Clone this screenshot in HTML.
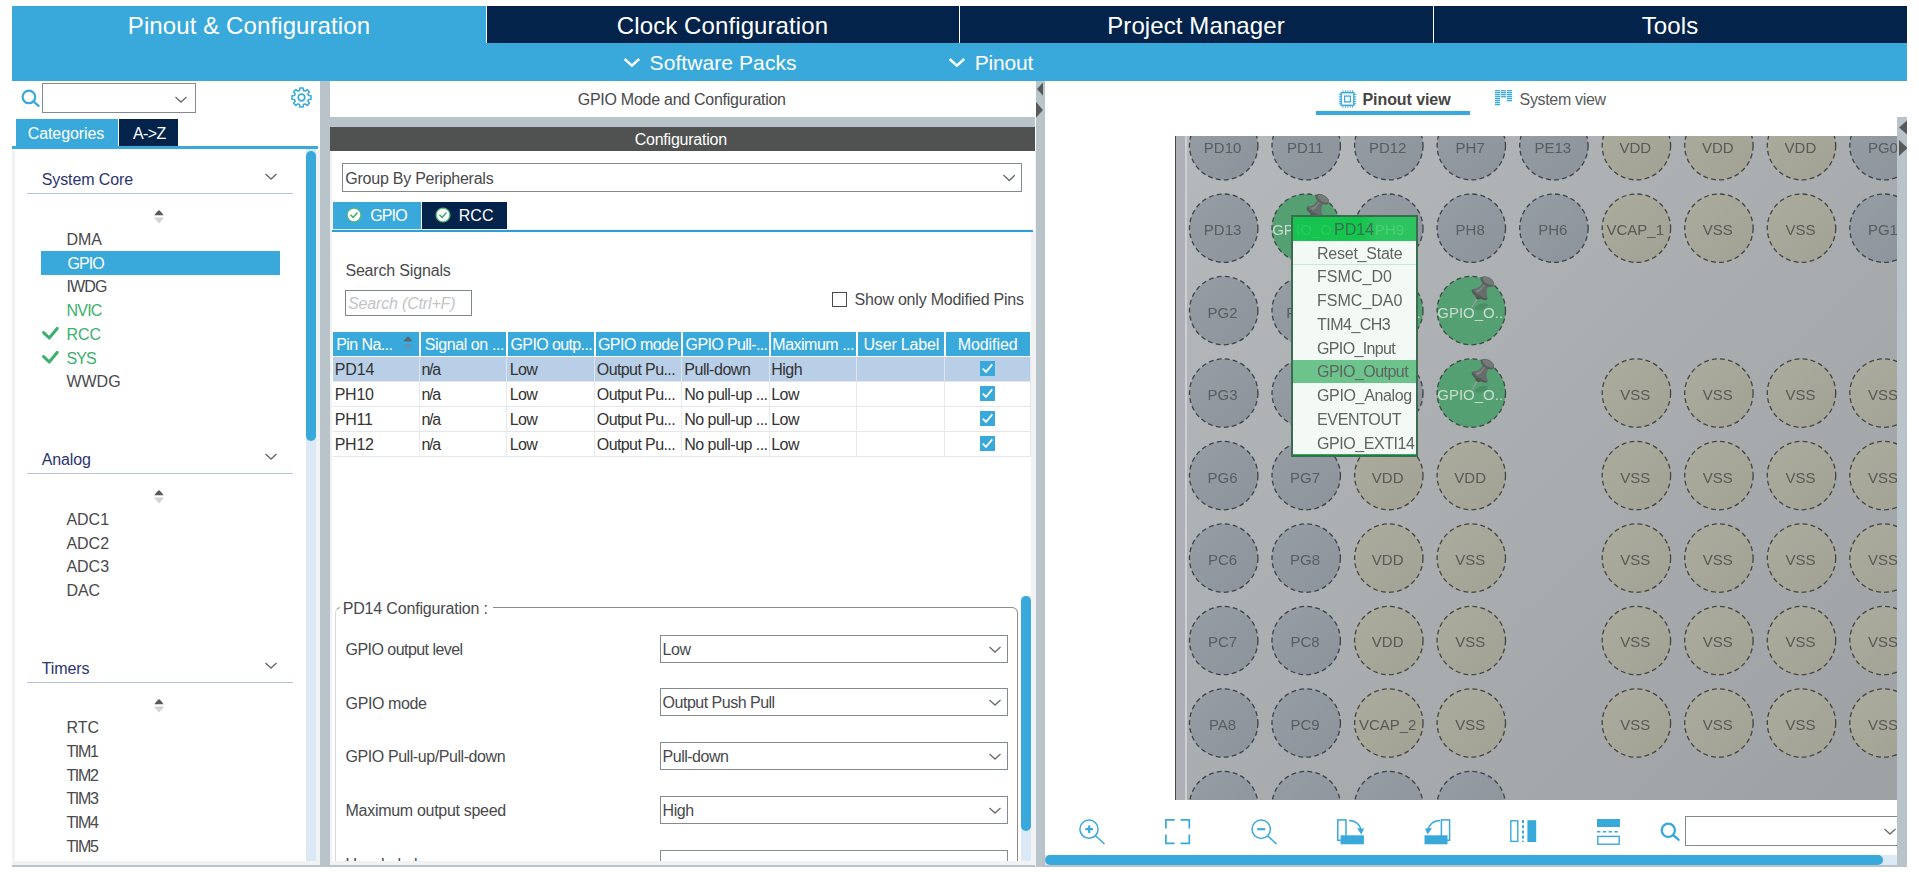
<!DOCTYPE html>
<html><head><meta charset="utf-8"><title>STM32CubeMX - Pinout &amp; Configuration</title>
<style>
html,body{margin:0;padding:0;background:#fff;}
body{width:1919px;height:872px;position:relative;overflow:hidden;font-family:"Liberation Sans",Arial,sans-serif;}
body div,body svg{position:absolute;box-sizing:border-box;}
.t{white-space:nowrap;}
.clip{overflow:hidden;}
</style></head><body>
<div style="left:12px;top:6px;width:1895px;height:75px;background:#39a9dc;"></div>
<div style="left:486px;top:6px;width:1421px;height:37px;background:#03234b;"></div>
<div style="left:486px;top:6px;width:1px;height:37px;background:#fff;"></div>
<div style="left:959px;top:6px;width:1px;height:37px;background:#fff;"></div>
<div style="left:1433px;top:6px;width:1px;height:37px;background:#fff;"></div>
<div class="t" style="top:10.00px;font-size:24px;line-height:31px;color:#fff;left:-51.00px;width:600px;text-align:center;letter-spacing:0.1px;">Pinout &amp; Configuration</div>
<div class="t" style="top:10.00px;font-size:24px;line-height:31px;color:#fff;left:422.50px;width:600px;text-align:center;letter-spacing:0.1px;">Clock Configuration</div>
<div class="t" style="top:10.00px;font-size:24px;line-height:31px;color:#fff;left:896.00px;width:600px;text-align:center;letter-spacing:0.1px;">Project Manager</div>
<div class="t" style="top:10.00px;font-size:24px;line-height:31px;color:#fff;left:1370.00px;width:600px;text-align:center;letter-spacing:0.1px;">Tools</div>
<svg style="left:622.6px;top:57.3px" width="18" height="12" viewBox="0 0 18 12"><path d="M1.6 2 L8.9 8.6 L16.2 2" fill="none" stroke="#fff" stroke-width="2.4" stroke-linejoin="miter"/></svg>
<div class="t" style="top:49.00px;font-size:21px;line-height:27px;color:#fff;letter-spacing:0.081px;left:649.60px;">Software Packs</div>
<svg style="left:948.2px;top:57.3px" width="18" height="12" viewBox="0 0 18 12"><path d="M1.6 2 L8.9 8.6 L16.2 2" fill="none" stroke="#fff" stroke-width="2.4" stroke-linejoin="miter"/></svg>
<div class="t" style="top:49.00px;font-size:21px;line-height:27px;color:#fff;letter-spacing:-0.217px;left:974.80px;">Pinout</div>
<svg style="left:20.5px;top:88.5px" width="20.0" height="19.0" viewBox="0 0 20 19"><circle cx="7.9" cy="7.9" r="6.3" fill="none" stroke="#39a9dc" stroke-width="2.2"/><path d="M12.4 12.4 L17.6 16.8" stroke="#39a9dc" stroke-width="2.3" stroke-linecap="round"/></svg>
<div style="left:42px;top:83px;width:154px;height:30px;border:1px solid #838a92;background:#fff"></div>
<svg style="left:174.5px;top:95.5px" width="12" height="8" viewBox="0 0 12 8"><path d="M0.5 1 L6.0 6 L11.5 1" fill="none" stroke="#6a6a6a" stroke-width="1.3"/></svg>
<svg style="left:290.5px;top:86.6px" width="21" height="21" viewBox="0 0 21 21"><polygon points="8.86,0.94 12.14,0.94 12.38,3.45 14.16,4.18 16.10,2.58 18.42,4.90 16.82,6.84 17.55,8.62 20.06,8.86 20.06,12.14 17.55,12.38 16.82,14.16 18.42,16.10 16.10,18.42 14.16,16.82 12.38,17.55 12.14,20.06 8.86,20.06 8.62,17.55 6.84,16.82 4.90,18.42 2.58,16.10 4.18,14.16 3.45,12.38 0.94,12.14 0.94,8.86 3.45,8.62 4.18,6.84 2.58,4.90 4.90,2.58 6.84,4.18 8.62,3.45" fill="none" stroke="#39a9dc" stroke-width="1.5" stroke-linejoin="round"/><circle cx="10.5" cy="10.5" r="3.3" fill="none" stroke="#39a9dc" stroke-width="1.7"/></svg>
<div style="left:16px;top:119px;width:102px;height:27px;background:#39a9dc;"></div>
<div class="t" style="top:123.00px;font-size:16px;line-height:21px;color:#fff;letter-spacing:-0.078px;left:-234.04px;width:600px;text-align:center;">Categories</div>
<div style="left:119px;top:119px;width:59px;height:27px;background:#03234b;"></div>
<div class="t" style="top:123.00px;font-size:16px;line-height:21px;color:#fff;letter-spacing:-0.667px;left:-150.73px;width:600px;text-align:center;">A-&gt;Z</div>
<div style="left:12px;top:146px;width:306px;height:3px;background:#39a9dc;"></div>
<div style="left:12px;top:149px;width:3px;height:716px;background:#f0f2f4;"></div>
<div style="left:12px;top:861px;width:308px;height:4px;background:#f0f2f4;"></div>
<div style="left:316px;top:149px;width:4px;height:716px;background:#f0f2f4;"></div>
<div style="left:306px;top:149px;width:10px;height:712px;background:#dbe9f6;"></div>
<div style="left:306px;top:151px;width:10px;height:290px;background:#39a9dc;border-radius:5px;"></div>
<div style="left:320px;top:81px;width:10px;height:786px;background:#b9c4ca;"></div>
<div class="t" style="top:169.00px;font-size:16px;line-height:21px;color:#2b3470;letter-spacing:-0.100px;left:41.70px;">System Core</div>
<svg style="left:265px;top:172.5px" width="12" height="8" viewBox="0 0 12 8"><path d="M0.5 1 L6.0 6 L11.5 1" fill="none" stroke="#666" stroke-width="1.3"/></svg>
<div style="left:27px;top:193px;width:266px;height:1.4px;background:#b7c0dc;"></div>
<svg style="left:153.4px;top:210.2px" width="12" height="14" viewBox="0 0 12 14"><path d="M6 0 L8.6 2.6 L10.6 5.3 L1.4 5.3 L3.4 2.6 Z" fill="#5a5a5a"/><path d="M1.3 7.4 L10.7 7.4 L10.2 8.8 L6 13.6 L1.8 8.8 Z" fill="#d2d2d2"/></svg>
<div class="t" style="top:229.00px;font-size:16px;line-height:21px;color:#49494c;left:66.40px;">DMA</div>
<div style="left:41px;top:251px;width:239px;height:24px;background:#39a9dc;"></div>
<div class="t" style="top:253.00px;font-size:16px;line-height:21px;color:#fff;letter-spacing:-0.933px;left:67.60px;">GPIO</div>
<div class="t" style="top:276.00px;font-size:16px;line-height:21px;color:#49494c;letter-spacing:-0.833px;left:66.40px;">IWDG</div>
<div class="t" style="top:300.00px;font-size:16px;line-height:21px;color:#3cb06c;letter-spacing:-0.733px;left:66.40px;">NVIC</div>
<svg style="left:41px;top:326.4px" width="19" height="15" viewBox="0 0 19 15"><path d="M2.6 6.6 L8.2 12 L16.2 2.4" fill="none" stroke="#3cb06c" stroke-width="3.1" stroke-linecap="round" stroke-linejoin="round"/></svg>
<div class="t" style="top:324.00px;font-size:16px;line-height:21px;color:#3cb06c;left:66.40px;">RCC</div>
<svg style="left:41px;top:350.4px" width="19" height="15" viewBox="0 0 19 15"><path d="M2.6 6.6 L8.2 12 L16.2 2.4" fill="none" stroke="#3cb06c" stroke-width="3.1" stroke-linecap="round" stroke-linejoin="round"/></svg>
<div class="t" style="top:348.00px;font-size:16px;line-height:21px;color:#3cb06c;letter-spacing:-0.850px;left:66.40px;">SYS</div>
<div class="t" style="top:371.00px;font-size:16px;line-height:21px;color:#49494c;left:66.40px;">WWDG</div>
<div class="t" style="top:449.00px;font-size:16px;line-height:21px;color:#2b3470;letter-spacing:-0.100px;left:41.70px;">Analog</div>
<svg style="left:265px;top:452.5px" width="12" height="8" viewBox="0 0 12 8"><path d="M0.5 1 L6.0 6 L11.5 1" fill="none" stroke="#666" stroke-width="1.3"/></svg>
<div style="left:27px;top:473px;width:266px;height:1.4px;background:#b7c0dc;"></div>
<svg style="left:153.4px;top:490.2px" width="12" height="14" viewBox="0 0 12 14"><path d="M6 0 L8.6 2.6 L10.6 5.3 L1.4 5.3 L3.4 2.6 Z" fill="#5a5a5a"/><path d="M1.3 7.4 L10.7 7.4 L10.2 8.8 L6 13.6 L1.8 8.8 Z" fill="#d2d2d2"/></svg>
<div class="t" style="top:509.00px;font-size:16px;line-height:21px;color:#49494c;left:66.40px;">ADC1</div>
<div class="t" style="top:533.00px;font-size:16px;line-height:21px;color:#49494c;left:66.40px;">ADC2</div>
<div class="t" style="top:556.00px;font-size:16px;line-height:21px;color:#49494c;left:66.40px;">ADC3</div>
<div class="t" style="top:580.00px;font-size:16px;line-height:21px;color:#49494c;left:66.40px;">DAC</div>
<div class="t" style="top:658.00px;font-size:16px;line-height:21px;color:#2b3470;letter-spacing:-0.100px;left:41.70px;">Timers</div>
<svg style="left:265px;top:661.5px" width="12" height="8" viewBox="0 0 12 8"><path d="M0.5 1 L6.0 6 L11.5 1" fill="none" stroke="#666" stroke-width="1.3"/></svg>
<div style="left:27px;top:682px;width:266px;height:1.4px;background:#b7c0dc;"></div>
<svg style="left:153.4px;top:699.2px" width="12" height="14" viewBox="0 0 12 14"><path d="M6 0 L8.6 2.6 L10.6 5.3 L1.4 5.3 L3.4 2.6 Z" fill="#5a5a5a"/><path d="M1.3 7.4 L10.7 7.4 L10.2 8.8 L6 13.6 L1.8 8.8 Z" fill="#d2d2d2"/></svg>
<div class="t" style="top:717.00px;font-size:16px;line-height:21px;color:#49494c;left:66.40px;">RTC</div>
<div class="t" style="top:741.00px;font-size:16px;line-height:21px;color:#49494c;letter-spacing:-1.333px;left:66.40px;">TIM1</div>
<div class="t" style="top:765.00px;font-size:16px;line-height:21px;color:#49494c;letter-spacing:-1.333px;left:66.40px;">TIM2</div>
<div class="t" style="top:788.00px;font-size:16px;line-height:21px;color:#49494c;letter-spacing:-1.333px;left:66.40px;">TIM3</div>
<div class="t" style="top:812.00px;font-size:16px;line-height:21px;color:#49494c;letter-spacing:-1.333px;left:66.40px;">TIM4</div>
<div class="t" style="top:836.00px;font-size:16px;line-height:21px;color:#49494c;letter-spacing:-1.333px;left:66.40px;">TIM5</div>
<div style="left:12px;top:865px;width:1895px;height:2px;background:#b9c4ca;"></div>
<div class="t" style="top:89.00px;font-size:16px;line-height:21px;color:#49494c;letter-spacing:-0.269px;left:381.77px;width:600px;text-align:center;">GPIO Mode and Configuration</div>
<div style="left:330px;top:117px;width:705px;height:10px;background:#b9c4ca;"></div>
<div style="left:330px;top:127px;width:705px;height:24px;background:#4f5251;"></div>
<div class="t" style="top:129.00px;font-size:16px;line-height:21px;color:#fff;letter-spacing:-0.225px;left:380.79px;width:600px;text-align:center;">Configuration</div>
<div style="left:342px;top:163px;width:680px;height:29px;border:1px solid #838a92;background:#fff"></div>
<div class="t" style="top:168.00px;font-size:16px;line-height:21px;color:#49494c;letter-spacing:-0.242px;left:345.30px;">Group By Peripherals</div>
<svg style="left:1002.5px;top:174px" width="12.5" height="8.5" viewBox="0 0 12.5 8.5"><path d="M0.5 1 L6.25 6.5 L12.0 1" fill="none" stroke="#6a6a6a" stroke-width="1.3"/></svg>
<div style="left:1031px;top:232px;width:5px;height:633px;background:#f0f2f4;"></div>
<div style="left:1035px;top:151px;width:1px;height:716px;background:#f0f2f4;"></div>
<div style="left:1036px;top:81px;width:9px;height:786px;background:#b9c4ca;"></div>
<svg style="left:1036.7px;top:82.4px" width="6.4" height="14.2" viewBox="0 0 6.4 14.2"><path d="M6.4 0 L0 7.1 L6.4 14.2 Z" fill="#58595b"/></svg>
<svg style="left:1036.2px;top:101.8px" width="6.9" height="15.8" viewBox="0 0 6.9 15.8"><path d="M0 0 L6.9 7.9 L0 15.8 Z" fill="#58595b"/></svg>
<div style="left:333px;top:202px;width:88px;height:27px;background:#39a9dc;"></div>
<svg style="left:346.4px;top:206.6px" width="16" height="16" viewBox="0 0 16 16"><circle cx="8" cy="8" r="6.9" fill="#fff" stroke="#4fb873" stroke-width="1.3"/><path d="M4.4 7.8 L7.2 10.4 L11.4 5.6" fill="none" stroke="#3fae6a" stroke-width="1.5"/></svg>
<div class="t" style="top:205.00px;font-size:16px;line-height:21px;color:#fff;letter-spacing:-0.900px;left:370.30px;">GPIO</div>
<div style="left:422px;top:202px;width:85px;height:27px;background:#03234b;"></div>
<svg style="left:435.4px;top:206.6px" width="16" height="16" viewBox="0 0 16 16"><circle cx="8" cy="8" r="6.9" fill="#fff" stroke="#4fb873" stroke-width="1.3"/><path d="M4.4 7.8 L7.2 10.4 L11.4 5.6" fill="none" stroke="#3fae6a" stroke-width="1.5"/></svg>
<div class="t" style="top:205.00px;font-size:16px;line-height:21px;color:#fff;left:458.80px;">RCC</div>
<div style="left:331px;top:229px;width:702px;height:1px;background:#eaf4fb;"></div>
<div style="left:331px;top:230px;width:702px;height:2px;background:#2f9dd6;"></div>
<div style="left:330px;top:151px;width:2px;height:710px;background:#f0f2f4;"></div>
<div class="t" style="top:260.00px;font-size:16px;line-height:21px;color:#49494c;letter-spacing:-0.169px;left:345.40px;">Search Signals</div>
<div style="left:345px;top:290px;width:127px;height:26px;border:1px solid #7f858c;background:#fff"></div>
<div class="t" style="top:293.00px;font-size:16px;line-height:21px;color:#c4c4c4;letter-spacing:-0.164px;left:348.00px;font-style:italic;">Search (Ctrl+F)</div>
<div style="left:832px;top:292px;width:14.5px;height:14.5px;border:1.4px solid #4a4a4a;background:#fff"></div>
<div class="t" style="top:289.00px;font-size:16px;line-height:21px;color:#49494c;letter-spacing:-0.223px;left:854.60px;">Show only Modified Pins</div>
<div style="left:333px;top:332px;width:86px;height:24px;background:#39a9dc;"></div>
<div class="t" style="top:334.00px;font-size:16px;line-height:21px;color:#fff;letter-spacing:-0.587px;left:336.20px;">Pin Na...</div>
<div style="left:421px;top:332px;width:85px;height:24px;background:#39a9dc;"></div>
<div class="t" style="top:334.00px;font-size:16px;line-height:21px;color:#fff;letter-spacing:-0.392px;left:424.70px;">Signal on ...</div>
<div style="left:508px;top:332px;width:86px;height:24px;background:#39a9dc;"></div>
<div class="t" style="top:334.00px;font-size:16px;line-height:21px;color:#fff;letter-spacing:-0.609px;left:510.50px;">GPIO outp...</div>
<div style="left:596px;top:332px;width:85px;height:24px;background:#39a9dc;"></div>
<div class="t" style="top:334.00px;font-size:16px;line-height:21px;color:#fff;letter-spacing:-0.475px;left:597.90px;">GPIO mode</div>
<div style="left:683px;top:332px;width:86px;height:24px;background:#39a9dc;"></div>
<div class="t" style="top:334.00px;font-size:16px;line-height:21px;color:#fff;letter-spacing:-0.617px;left:685.60px;">GPIO Pull-...</div>
<div style="left:771px;top:332px;width:85px;height:24px;background:#39a9dc;"></div>
<div class="t" style="top:334.00px;font-size:16px;line-height:21px;color:#fff;letter-spacing:-0.490px;left:772.30px;">Maximum ...</div>
<div style="left:858px;top:332px;width:86px;height:24px;background:#39a9dc;"></div>
<div class="t" style="top:334.00px;font-size:16px;line-height:21px;color:#fff;letter-spacing:-0.167px;left:601.32px;width:600px;text-align:center;">User Label</div>
<div style="left:946px;top:332px;width:84px;height:24px;background:#39a9dc;"></div>
<div class="t" style="top:334.00px;font-size:16px;line-height:21px;color:#fff;letter-spacing:-0.071px;left:687.66px;width:600px;text-align:center;">Modified</div>
<svg style="left:402.5px;top:335.5px" width="10" height="14" viewBox="0 0 10 14"><path d="M5 0.3 L7.4 2.6 L9.6 5.4 L0.4 5.4 L2.6 2.6 Z" fill="#586670"/><path d="M0.4 8.2 L9.6 8.2 L9.2 9.4 L5 13.6 L0.8 9.4 Z" fill="#5a97bb"/></svg>
<div style="left:333px;top:357px;width:697px;height:24px;background:#b8cfe7;"></div>
<div style="left:333px;top:381px;width:697px;height:1px;background:#e3e7eb;"></div>
<div style="left:418.7px;top:357px;width:1.7px;height:24px;background:#dde6f0;"></div>
<div style="left:505.7px;top:357px;width:1.7px;height:24px;background:#dde6f0;"></div>
<div style="left:593.7px;top:357px;width:1.7px;height:24px;background:#dde6f0;"></div>
<div style="left:680.7px;top:357px;width:1.7px;height:24px;background:#dde6f0;"></div>
<div style="left:768.7px;top:357px;width:1.7px;height:24px;background:#dde6f0;"></div>
<div style="left:855.7px;top:357px;width:1.7px;height:24px;background:#dde6f0;"></div>
<div style="left:943.7px;top:357px;width:1.7px;height:24px;background:#dde6f0;"></div>
<div style="left:1030px;top:357px;width:1px;height:25px;background:#e3e7eb;"></div>
<div class="t" style="top:359.00px;font-size:16px;line-height:21px;color:#333;letter-spacing:-0.067px;left:334.70px;">PD14</div>
<div class="t" style="top:359.00px;font-size:16px;line-height:21px;color:#333;letter-spacing:-1.250px;left:421.40px;">n/a</div>
<div class="t" style="top:359.00px;font-size:16px;line-height:21px;color:#333;letter-spacing:-0.600px;left:509.70px;">Low</div>
<div class="t" style="top:359.00px;font-size:16px;line-height:21px;color:#333;letter-spacing:-0.600px;left:596.80px;">Output Pu...</div>
<div class="t" style="top:359.00px;font-size:16px;line-height:21px;color:#333;letter-spacing:-0.463px;left:684.30px;">Pull-down</div>
<div class="t" style="top:359.00px;font-size:16px;line-height:21px;color:#333;letter-spacing:-0.533px;left:771.30px;">High</div>
<svg style="left:980px;top:361px" width="15" height="15" viewBox="0 0 15 15"><rect width="15" height="15" fill="#39a9dc"/><path d="M2.8 7.6 L6 10.9 L12.3 3.4" fill="none" stroke="#fff" stroke-width="1.7"/></svg>
<div style="left:333px;top:406px;width:697px;height:1px;background:#e3e7eb;"></div>
<div style="left:418.7px;top:382px;width:1.7px;height:24px;background:#e6eaee;"></div>
<div style="left:505.7px;top:382px;width:1.7px;height:24px;background:#e6eaee;"></div>
<div style="left:593.7px;top:382px;width:1.7px;height:24px;background:#e6eaee;"></div>
<div style="left:680.7px;top:382px;width:1.7px;height:24px;background:#e6eaee;"></div>
<div style="left:768.7px;top:382px;width:1.7px;height:24px;background:#e6eaee;"></div>
<div style="left:855.7px;top:382px;width:1.7px;height:24px;background:#e6eaee;"></div>
<div style="left:943.7px;top:382px;width:1.7px;height:24px;background:#e6eaee;"></div>
<div style="left:1030px;top:382px;width:1px;height:25px;background:#e3e7eb;"></div>
<div class="t" style="top:384.00px;font-size:16px;line-height:21px;color:#333;letter-spacing:-0.267px;left:334.70px;">PH10</div>
<div class="t" style="top:384.00px;font-size:16px;line-height:21px;color:#333;letter-spacing:-1.250px;left:421.40px;">n/a</div>
<div class="t" style="top:384.00px;font-size:16px;line-height:21px;color:#333;letter-spacing:-0.600px;left:509.70px;">Low</div>
<div class="t" style="top:384.00px;font-size:16px;line-height:21px;color:#333;letter-spacing:-0.600px;left:596.80px;">Output Pu...</div>
<div class="t" style="top:384.00px;font-size:16px;line-height:21px;color:#333;letter-spacing:-0.538px;left:684.30px;">No pull-up ...</div>
<div class="t" style="top:384.00px;font-size:16px;line-height:21px;color:#333;letter-spacing:-0.600px;left:771.30px;">Low</div>
<svg style="left:980px;top:386px" width="15" height="15" viewBox="0 0 15 15"><rect width="15" height="15" fill="#39a9dc"/><path d="M2.8 7.6 L6 10.9 L12.3 3.4" fill="none" stroke="#fff" stroke-width="1.7"/></svg>
<div style="left:333px;top:431px;width:697px;height:1px;background:#e3e7eb;"></div>
<div style="left:418.7px;top:407px;width:1.7px;height:24px;background:#e6eaee;"></div>
<div style="left:505.7px;top:407px;width:1.7px;height:24px;background:#e6eaee;"></div>
<div style="left:593.7px;top:407px;width:1.7px;height:24px;background:#e6eaee;"></div>
<div style="left:680.7px;top:407px;width:1.7px;height:24px;background:#e6eaee;"></div>
<div style="left:768.7px;top:407px;width:1.7px;height:24px;background:#e6eaee;"></div>
<div style="left:855.7px;top:407px;width:1.7px;height:24px;background:#e6eaee;"></div>
<div style="left:943.7px;top:407px;width:1.7px;height:24px;background:#e6eaee;"></div>
<div style="left:1030px;top:407px;width:1px;height:25px;background:#e3e7eb;"></div>
<div class="t" style="top:409.00px;font-size:16px;line-height:21px;color:#333;letter-spacing:-0.200px;left:334.70px;">PH11</div>
<div class="t" style="top:409.00px;font-size:16px;line-height:21px;color:#333;letter-spacing:-1.250px;left:421.40px;">n/a</div>
<div class="t" style="top:409.00px;font-size:16px;line-height:21px;color:#333;letter-spacing:-0.600px;left:509.70px;">Low</div>
<div class="t" style="top:409.00px;font-size:16px;line-height:21px;color:#333;letter-spacing:-0.600px;left:596.80px;">Output Pu...</div>
<div class="t" style="top:409.00px;font-size:16px;line-height:21px;color:#333;letter-spacing:-0.538px;left:684.30px;">No pull-up ...</div>
<div class="t" style="top:409.00px;font-size:16px;line-height:21px;color:#333;letter-spacing:-0.600px;left:771.30px;">Low</div>
<svg style="left:980px;top:411px" width="15" height="15" viewBox="0 0 15 15"><rect width="15" height="15" fill="#39a9dc"/><path d="M2.8 7.6 L6 10.9 L12.3 3.4" fill="none" stroke="#fff" stroke-width="1.7"/></svg>
<div style="left:333px;top:456px;width:697px;height:1px;background:#e3e7eb;"></div>
<div style="left:418.7px;top:432px;width:1.7px;height:24px;background:#e6eaee;"></div>
<div style="left:505.7px;top:432px;width:1.7px;height:24px;background:#e6eaee;"></div>
<div style="left:593.7px;top:432px;width:1.7px;height:24px;background:#e6eaee;"></div>
<div style="left:680.7px;top:432px;width:1.7px;height:24px;background:#e6eaee;"></div>
<div style="left:768.7px;top:432px;width:1.7px;height:24px;background:#e6eaee;"></div>
<div style="left:855.7px;top:432px;width:1.7px;height:24px;background:#e6eaee;"></div>
<div style="left:943.7px;top:432px;width:1.7px;height:24px;background:#e6eaee;"></div>
<div style="left:1030px;top:432px;width:1px;height:25px;background:#e3e7eb;"></div>
<div class="t" style="top:434.00px;font-size:16px;line-height:21px;color:#333;letter-spacing:-0.267px;left:334.70px;">PH12</div>
<div class="t" style="top:434.00px;font-size:16px;line-height:21px;color:#333;letter-spacing:-1.250px;left:421.40px;">n/a</div>
<div class="t" style="top:434.00px;font-size:16px;line-height:21px;color:#333;letter-spacing:-0.600px;left:509.70px;">Low</div>
<div class="t" style="top:434.00px;font-size:16px;line-height:21px;color:#333;letter-spacing:-0.600px;left:596.80px;">Output Pu...</div>
<div class="t" style="top:434.00px;font-size:16px;line-height:21px;color:#333;letter-spacing:-0.538px;left:684.30px;">No pull-up ...</div>
<div class="t" style="top:434.00px;font-size:16px;line-height:21px;color:#333;letter-spacing:-0.600px;left:771.30px;">Low</div>
<svg style="left:980px;top:436px" width="15" height="15" viewBox="0 0 15 15"><rect width="15" height="15" fill="#39a9dc"/><path d="M2.8 7.6 L6 10.9 L12.3 3.4" fill="none" stroke="#fff" stroke-width="1.7"/></svg>
<div class="clip" style="left:331px;top:590px;width:700px;height:271px">
<div style="left:4px;top:17px;width:683px;height:300px;border:1px solid #8c8c8c;border-left-color:#d6dade;border-radius:6px;"></div>
<div style="left:9px;top:10px;width:153px;height:16px;background:#fff"></div>
<div class="t" style="left:11.70px;top:8.00px;font-size:16px;line-height:21px;color:#49494c;letter-spacing:-0.168px;">PD14 Configuration :</div>
<div class="t" style="left:14.60px;top:49.00px;font-size:16px;line-height:21px;color:#49494c;letter-spacing:-0.550px;">GPIO output level</div>
<div style="left:329px;top:45px;width:348px;height:28px;border:1px solid #838a92;background:#fff"></div>
<div class="t" style="left:331.60px;top:49.00px;font-size:16px;line-height:21px;color:#49494c;letter-spacing:-0.450px;">Low</div>
<svg style="left:658px;top:55.5px" width="12" height="8" viewBox="0 0 12 8"><path d="M0.5 1 L6 6 L11.5 1" fill="none" stroke="#6a6a6a" stroke-width="1.3"/></svg>
<div class="t" style="left:14.60px;top:103.00px;font-size:16px;line-height:21px;color:#49494c;letter-spacing:-0.387px;">GPIO mode</div>
<div style="left:329px;top:98.29999999999995px;width:348px;height:28px;border:1px solid #838a92;background:#fff"></div>
<div class="t" style="left:331.60px;top:102.00px;font-size:16px;line-height:21px;color:#49494c;letter-spacing:-0.500px;">Output Push Pull</div>
<svg style="left:658px;top:108.79999999999995px" width="12" height="8" viewBox="0 0 12 8"><path d="M0.5 1 L6 6 L11.5 1" fill="none" stroke="#6a6a6a" stroke-width="1.3"/></svg>
<div class="t" style="left:14.60px;top:156.00px;font-size:16px;line-height:21px;color:#49494c;letter-spacing:-0.429px;">GPIO Pull-up/Pull-down</div>
<div style="left:329px;top:152.29999999999995px;width:348px;height:28px;border:1px solid #838a92;background:#fff"></div>
<div class="t" style="left:331.60px;top:156.00px;font-size:16px;line-height:21px;color:#49494c;letter-spacing:-0.500px;">Pull-down</div>
<svg style="left:658px;top:162.79999999999995px" width="12" height="8" viewBox="0 0 12 8"><path d="M0.5 1 L6 6 L11.5 1" fill="none" stroke="#6a6a6a" stroke-width="1.3"/></svg>
<div class="t" style="left:14.60px;top:210.00px;font-size:16px;line-height:21px;color:#49494c;letter-spacing:-0.300px;">Maximum output speed</div>
<div style="left:329px;top:206px;width:348px;height:28px;border:1px solid #838a92;background:#fff"></div>
<div class="t" style="left:331.60px;top:210.00px;font-size:16px;line-height:21px;color:#49494c;letter-spacing:-0.433px;">High</div>
<svg style="left:658px;top:216.5px" width="12" height="8" viewBox="0 0 12 8"><path d="M0.5 1 L6 6 L11.5 1" fill="none" stroke="#6a6a6a" stroke-width="1.3"/></svg>
<div class="t" style="left:14.60px;top:264.00px;font-size:16px;line-height:21px;color:#49494c;letter-spacing:-0.600px;">User Label</div>
<div style="left:329px;top:260.29999999999995px;width:348px;height:28px;border:1px solid #838a92;background:#fff"></div>
</div>
<div style="left:1021px;top:596px;width:10px;height:265px;background:#dbe9f6;"></div>
<div style="left:1021px;top:596px;width:10px;height:235px;background:#39a9dc;border-radius:5px;"></div>
<div style="left:330px;top:861px;width:706px;height:4px;background:#f0f2f4;"></div>
<svg style="left:1338px;top:89.5px" width="19" height="18" viewBox="0 0 19 18">
<g stroke="#39a9dc" fill="none"><rect x="3.2" y="2.7" width="12.6" height="12.6" stroke-width="1.4"/><rect x="6.6" y="6.1" width="5.8" height="5.8" stroke-width="1.3"/>
<path d="M5 0.3v2.4M7.4 0.3v2.4M9.8 0.3v2.4M12.2 0.3v2.4M14.4 0.3v2.4M5 15.3v2.4M7.4 15.3v2.4M9.8 15.3v2.4M12.2 15.3v2.4M14.4 15.3v2.4M0.8 4.4h2.4M0.8 6.8h2.4M0.8 9.2h2.4M0.8 11.6h2.4M0.8 13.8h2.4M15.8 4.4h2.4M15.8 6.8h2.4M15.8 9.2h2.4M15.8 11.6h2.4M15.8 13.8h2.4" stroke-width="1"/></g></svg>
<div class="t" style="top:89.00px;font-size:16px;line-height:21px;color:#454545;letter-spacing:-0.080px;left:1362.50px;font-weight:bold;">Pinout view</div>
<div style="left:1316px;top:111px;width:154px;height:3.6px;background:#39a9dc;"></div>
<svg style="left:1495px;top:90px" width="18" height="17" viewBox="0 0 18 17"><g fill="#39a9dc"><rect x="0" y="0.10" width="5.1" height="1.3"/><rect x="5.9" y="0.10" width="5.2" height="1.3"/><rect x="11.9" y="0.10" width="5.2" height="1.3"/><rect x="0" y="2.08" width="5.1" height="1.3"/><rect x="5.9" y="2.08" width="5.2" height="1.3"/><rect x="11.9" y="2.08" width="5.2" height="1.3"/><rect x="0" y="4.06" width="5.1" height="1.3"/><rect x="5.9" y="4.06" width="5.2" height="1.3"/><rect x="11.9" y="4.06" width="5.2" height="1.3"/><rect x="0" y="6.04" width="5.1" height="1.3"/><rect x="5.9" y="6.04" width="5.2" height="1.3"/><rect x="11.9" y="6.04" width="5.2" height="1.3"/><rect x="0" y="8.02" width="5.1" height="1.3"/><rect x="11.9" y="8.02" width="5.2" height="1.3"/><rect x="0" y="10.00" width="5.1" height="1.3"/><rect x="11.9" y="10.00" width="5.2" height="1.3"/><rect x="0" y="11.98" width="5.1" height="1.3"/><rect x="0" y="13.96" width="5.1" height="1.3"/></g></svg>
<div class="t" style="top:89.00px;font-size:16px;line-height:21px;color:#5a5a5a;letter-spacing:-0.340px;left:1519.60px;">System view</div>
<div class="clip" style="left:1175px;top:136px;width:722px;height:664px;background:linear-gradient(135deg,#b5b9bc 0%,#aaaeb1 45%,#9da1a4 100%)">
<div style="left:0;top:0;width:1.4px;height:664px;background:#45484a"></div>
<div style="left:1.4px;top:0;width:8.8px;height:664px;background:#adb1b5"></div>
<div style="left:10.2px;top:0;width:1.5px;height:664px;background:#cdd0d3"></div>
<svg style="left:0;top:0;will-change:transform" width="722" height="664" viewBox="0 0 722 664" font-family="Liberation Sans, Arial, sans-serif" font-size="15"><defs><linearGradient id="gp" x1="0" y1="0" x2="1" y2="1"><stop offset="0" stop-color="#969da5"/><stop offset="1" stop-color="#8c939a"/></linearGradient><linearGradient id="pw" x1="0" y1="0" x2="1" y2="1"><stop offset="0" stop-color="#acac9e"/><stop offset="1" stop-color="#a2a294"/></linearGradient></defs><circle cx="48.7" cy="9.7" r="34.2" fill="url(#gp)" stroke="#3f4246" stroke-width="1.3" stroke-dasharray="4.9 3.2"/><text x="47.6" y="16.6" text-anchor="middle" fill="#5a5d61">PD10</text><circle cx="131.2" cy="9.7" r="34.2" fill="url(#gp)" stroke="#3f4246" stroke-width="1.3" stroke-dasharray="4.9 3.2"/><text x="130.1" y="16.6" text-anchor="middle" fill="#5a5d61">PD11</text><circle cx="213.8" cy="9.7" r="34.2" fill="url(#gp)" stroke="#3f4246" stroke-width="1.3" stroke-dasharray="4.9 3.2"/><text x="212.7" y="16.6" text-anchor="middle" fill="#5a5d61">PD12</text><circle cx="296.3" cy="9.7" r="34.2" fill="url(#gp)" stroke="#3f4246" stroke-width="1.3" stroke-dasharray="4.9 3.2"/><text x="295.2" y="16.6" text-anchor="middle" fill="#5a5d61">PH7</text><circle cx="378.9" cy="9.7" r="34.2" fill="url(#gp)" stroke="#3f4246" stroke-width="1.3" stroke-dasharray="4.9 3.2"/><text x="377.8" y="16.6" text-anchor="middle" fill="#5a5d61">PE13</text><circle cx="461.4" cy="9.7" r="34.2" fill="url(#pw)" stroke="#44453f" stroke-width="1.3" stroke-dasharray="4.9 3.2"/><text x="460.3" y="16.6" text-anchor="middle" fill="#595955">VDD</text><circle cx="543.9" cy="9.7" r="34.2" fill="url(#pw)" stroke="#44453f" stroke-width="1.3" stroke-dasharray="4.9 3.2"/><text x="542.8" y="16.6" text-anchor="middle" fill="#595955">VDD</text><circle cx="626.5" cy="9.7" r="34.2" fill="url(#pw)" stroke="#44453f" stroke-width="1.3" stroke-dasharray="4.9 3.2"/><text x="625.4" y="16.6" text-anchor="middle" fill="#595955">VDD</text><circle cx="709.0" cy="9.7" r="34.2" fill="url(#gp)" stroke="#3f4246" stroke-width="1.3" stroke-dasharray="4.9 3.2"/><text x="707.9" y="16.6" text-anchor="middle" fill="#5a5d61">PG0</text><circle cx="48.7" cy="92.2" r="34.2" fill="url(#gp)" stroke="#3f4246" stroke-width="1.3" stroke-dasharray="4.9 3.2"/><text x="47.6" y="99.1" text-anchor="middle" fill="#5a5d61">PD13</text><circle cx="131.2" cy="92.2" r="34.2" fill="#54a073" stroke="#3b4a41" stroke-width="1.3" stroke-dasharray="4.9 3.2"/><text x="130.1" y="99.1" text-anchor="middle" fill="#c9dccf">GPIO_O..</text><circle cx="213.8" cy="92.2" r="34.2" fill="url(#gp)" stroke="#3f4246" stroke-width="1.3" stroke-dasharray="4.9 3.2"/><text x="212.7" y="99.1" text-anchor="middle" fill="#5a5d61">PH9</text><circle cx="296.3" cy="92.2" r="34.2" fill="url(#gp)" stroke="#3f4246" stroke-width="1.3" stroke-dasharray="4.9 3.2"/><text x="295.2" y="99.1" text-anchor="middle" fill="#5a5d61">PH8</text><circle cx="378.9" cy="92.2" r="34.2" fill="url(#gp)" stroke="#3f4246" stroke-width="1.3" stroke-dasharray="4.9 3.2"/><text x="377.8" y="99.1" text-anchor="middle" fill="#5a5d61">PH6</text><circle cx="461.4" cy="92.2" r="34.2" fill="url(#pw)" stroke="#44453f" stroke-width="1.3" stroke-dasharray="4.9 3.2"/><text x="460.3" y="99.1" text-anchor="middle" fill="#595955">VCAP_1</text><circle cx="543.9" cy="92.2" r="34.2" fill="url(#pw)" stroke="#44453f" stroke-width="1.3" stroke-dasharray="4.9 3.2"/><text x="542.8" y="99.1" text-anchor="middle" fill="#595955">VSS</text><circle cx="626.5" cy="92.2" r="34.2" fill="url(#pw)" stroke="#44453f" stroke-width="1.3" stroke-dasharray="4.9 3.2"/><text x="625.4" y="99.1" text-anchor="middle" fill="#595955">VSS</text><circle cx="709.0" cy="92.2" r="34.2" fill="url(#gp)" stroke="#3f4246" stroke-width="1.3" stroke-dasharray="4.9 3.2"/><text x="707.9" y="99.1" text-anchor="middle" fill="#5a5d61">PG1</text><circle cx="48.7" cy="174.6" r="34.2" fill="url(#gp)" stroke="#3f4246" stroke-width="1.3" stroke-dasharray="4.9 3.2"/><text x="47.6" y="181.5" text-anchor="middle" fill="#5a5d61">PG2</text><circle cx="131.2" cy="174.6" r="34.2" fill="url(#gp)" stroke="#3f4246" stroke-width="1.3" stroke-dasharray="4.9 3.2"/><text x="130.1" y="181.5" text-anchor="middle" fill="#5a5d61">PD15</text><circle cx="213.8" cy="174.6" r="34.2" fill="#54a073" stroke="#3b4a41" stroke-width="1.3" stroke-dasharray="4.9 3.2"/><text x="212.7" y="181.5" text-anchor="middle" fill="#c9dccf">GPIO_O..</text><circle cx="296.3" cy="174.6" r="34.2" fill="#54a073" stroke="#3b4a41" stroke-width="1.3" stroke-dasharray="4.9 3.2"/><text x="295.2" y="181.5" text-anchor="middle" fill="#c9dccf">GPIO_O..</text><circle cx="48.7" cy="257.1" r="34.2" fill="url(#gp)" stroke="#3f4246" stroke-width="1.3" stroke-dasharray="4.9 3.2"/><text x="47.6" y="264.0" text-anchor="middle" fill="#5a5d61">PG3</text><circle cx="131.2" cy="257.1" r="34.2" fill="url(#gp)" stroke="#3f4246" stroke-width="1.3" stroke-dasharray="4.9 3.2"/><text x="130.1" y="264.0" text-anchor="middle" fill="#5a5d61">PG4</text><circle cx="213.8" cy="257.1" r="34.2" fill="url(#gp)" stroke="#3f4246" stroke-width="1.3" stroke-dasharray="4.9 3.2"/><text x="212.7" y="264.0" text-anchor="middle" fill="#5a5d61">PG5</text><circle cx="296.3" cy="257.1" r="34.2" fill="#54a073" stroke="#3b4a41" stroke-width="1.3" stroke-dasharray="4.9 3.2"/><text x="295.2" y="264.0" text-anchor="middle" fill="#c9dccf">GPIO_O..</text><circle cx="461.4" cy="257.1" r="34.2" fill="url(#pw)" stroke="#44453f" stroke-width="1.3" stroke-dasharray="4.9 3.2"/><text x="460.3" y="264.0" text-anchor="middle" fill="#595955">VSS</text><circle cx="543.9" cy="257.1" r="34.2" fill="url(#pw)" stroke="#44453f" stroke-width="1.3" stroke-dasharray="4.9 3.2"/><text x="542.8" y="264.0" text-anchor="middle" fill="#595955">VSS</text><circle cx="626.5" cy="257.1" r="34.2" fill="url(#pw)" stroke="#44453f" stroke-width="1.3" stroke-dasharray="4.9 3.2"/><text x="625.4" y="264.0" text-anchor="middle" fill="#595955">VSS</text><circle cx="709.0" cy="257.1" r="34.2" fill="url(#pw)" stroke="#44453f" stroke-width="1.3" stroke-dasharray="4.9 3.2"/><text x="707.9" y="264.0" text-anchor="middle" fill="#595955">VSS</text><circle cx="48.7" cy="339.6" r="34.2" fill="url(#gp)" stroke="#3f4246" stroke-width="1.3" stroke-dasharray="4.9 3.2"/><text x="47.6" y="346.5" text-anchor="middle" fill="#5a5d61">PG6</text><circle cx="131.2" cy="339.6" r="34.2" fill="url(#gp)" stroke="#3f4246" stroke-width="1.3" stroke-dasharray="4.9 3.2"/><text x="130.1" y="346.5" text-anchor="middle" fill="#5a5d61">PG7</text><circle cx="213.8" cy="339.6" r="34.2" fill="url(#pw)" stroke="#44453f" stroke-width="1.3" stroke-dasharray="4.9 3.2"/><text x="212.7" y="346.5" text-anchor="middle" fill="#595955">VDD</text><circle cx="296.3" cy="339.6" r="34.2" fill="url(#pw)" stroke="#44453f" stroke-width="1.3" stroke-dasharray="4.9 3.2"/><text x="295.2" y="346.5" text-anchor="middle" fill="#595955">VDD</text><circle cx="461.4" cy="339.6" r="34.2" fill="url(#pw)" stroke="#44453f" stroke-width="1.3" stroke-dasharray="4.9 3.2"/><text x="460.3" y="346.5" text-anchor="middle" fill="#595955">VSS</text><circle cx="543.9" cy="339.6" r="34.2" fill="url(#pw)" stroke="#44453f" stroke-width="1.3" stroke-dasharray="4.9 3.2"/><text x="542.8" y="346.5" text-anchor="middle" fill="#595955">VSS</text><circle cx="626.5" cy="339.6" r="34.2" fill="url(#pw)" stroke="#44453f" stroke-width="1.3" stroke-dasharray="4.9 3.2"/><text x="625.4" y="346.5" text-anchor="middle" fill="#595955">VSS</text><circle cx="709.0" cy="339.6" r="34.2" fill="url(#pw)" stroke="#44453f" stroke-width="1.3" stroke-dasharray="4.9 3.2"/><text x="707.9" y="346.5" text-anchor="middle" fill="#595955">VSS</text><circle cx="48.7" cy="422.1" r="34.2" fill="url(#gp)" stroke="#3f4246" stroke-width="1.3" stroke-dasharray="4.9 3.2"/><text x="47.6" y="428.9" text-anchor="middle" fill="#5a5d61">PC6</text><circle cx="131.2" cy="422.1" r="34.2" fill="url(#gp)" stroke="#3f4246" stroke-width="1.3" stroke-dasharray="4.9 3.2"/><text x="130.1" y="428.9" text-anchor="middle" fill="#5a5d61">PG8</text><circle cx="213.8" cy="422.1" r="34.2" fill="url(#pw)" stroke="#44453f" stroke-width="1.3" stroke-dasharray="4.9 3.2"/><text x="212.7" y="428.9" text-anchor="middle" fill="#595955">VDD</text><circle cx="296.3" cy="422.1" r="34.2" fill="url(#pw)" stroke="#44453f" stroke-width="1.3" stroke-dasharray="4.9 3.2"/><text x="295.2" y="428.9" text-anchor="middle" fill="#595955">VSS</text><circle cx="461.4" cy="422.1" r="34.2" fill="url(#pw)" stroke="#44453f" stroke-width="1.3" stroke-dasharray="4.9 3.2"/><text x="460.3" y="428.9" text-anchor="middle" fill="#595955">VSS</text><circle cx="543.9" cy="422.1" r="34.2" fill="url(#pw)" stroke="#44453f" stroke-width="1.3" stroke-dasharray="4.9 3.2"/><text x="542.8" y="428.9" text-anchor="middle" fill="#595955">VSS</text><circle cx="626.5" cy="422.1" r="34.2" fill="url(#pw)" stroke="#44453f" stroke-width="1.3" stroke-dasharray="4.9 3.2"/><text x="625.4" y="428.9" text-anchor="middle" fill="#595955">VSS</text><circle cx="709.0" cy="422.1" r="34.2" fill="url(#pw)" stroke="#44453f" stroke-width="1.3" stroke-dasharray="4.9 3.2"/><text x="707.9" y="428.9" text-anchor="middle" fill="#595955">VSS</text><circle cx="48.7" cy="504.5" r="34.2" fill="url(#gp)" stroke="#3f4246" stroke-width="1.3" stroke-dasharray="4.9 3.2"/><text x="47.6" y="511.4" text-anchor="middle" fill="#5a5d61">PC7</text><circle cx="131.2" cy="504.5" r="34.2" fill="url(#gp)" stroke="#3f4246" stroke-width="1.3" stroke-dasharray="4.9 3.2"/><text x="130.1" y="511.4" text-anchor="middle" fill="#5a5d61">PC8</text><circle cx="213.8" cy="504.5" r="34.2" fill="url(#pw)" stroke="#44453f" stroke-width="1.3" stroke-dasharray="4.9 3.2"/><text x="212.7" y="511.4" text-anchor="middle" fill="#595955">VDD</text><circle cx="296.3" cy="504.5" r="34.2" fill="url(#pw)" stroke="#44453f" stroke-width="1.3" stroke-dasharray="4.9 3.2"/><text x="295.2" y="511.4" text-anchor="middle" fill="#595955">VSS</text><circle cx="461.4" cy="504.5" r="34.2" fill="url(#pw)" stroke="#44453f" stroke-width="1.3" stroke-dasharray="4.9 3.2"/><text x="460.3" y="511.4" text-anchor="middle" fill="#595955">VSS</text><circle cx="543.9" cy="504.5" r="34.2" fill="url(#pw)" stroke="#44453f" stroke-width="1.3" stroke-dasharray="4.9 3.2"/><text x="542.8" y="511.4" text-anchor="middle" fill="#595955">VSS</text><circle cx="626.5" cy="504.5" r="34.2" fill="url(#pw)" stroke="#44453f" stroke-width="1.3" stroke-dasharray="4.9 3.2"/><text x="625.4" y="511.4" text-anchor="middle" fill="#595955">VSS</text><circle cx="709.0" cy="504.5" r="34.2" fill="url(#pw)" stroke="#44453f" stroke-width="1.3" stroke-dasharray="4.9 3.2"/><text x="707.9" y="511.4" text-anchor="middle" fill="#595955">VSS</text><circle cx="48.7" cy="587.0" r="34.2" fill="url(#gp)" stroke="#3f4246" stroke-width="1.3" stroke-dasharray="4.9 3.2"/><text x="47.6" y="593.9" text-anchor="middle" fill="#5a5d61">PA8</text><circle cx="131.2" cy="587.0" r="34.2" fill="url(#gp)" stroke="#3f4246" stroke-width="1.3" stroke-dasharray="4.9 3.2"/><text x="130.1" y="593.9" text-anchor="middle" fill="#5a5d61">PC9</text><circle cx="213.8" cy="587.0" r="34.2" fill="url(#pw)" stroke="#44453f" stroke-width="1.3" stroke-dasharray="4.9 3.2"/><text x="212.7" y="593.9" text-anchor="middle" fill="#595955">VCAP_2</text><circle cx="296.3" cy="587.0" r="34.2" fill="url(#pw)" stroke="#44453f" stroke-width="1.3" stroke-dasharray="4.9 3.2"/><text x="295.2" y="593.9" text-anchor="middle" fill="#595955">VSS</text><circle cx="461.4" cy="587.0" r="34.2" fill="url(#pw)" stroke="#44453f" stroke-width="1.3" stroke-dasharray="4.9 3.2"/><text x="460.3" y="593.9" text-anchor="middle" fill="#595955">VSS</text><circle cx="543.9" cy="587.0" r="34.2" fill="url(#pw)" stroke="#44453f" stroke-width="1.3" stroke-dasharray="4.9 3.2"/><text x="542.8" y="593.9" text-anchor="middle" fill="#595955">VSS</text><circle cx="626.5" cy="587.0" r="34.2" fill="url(#pw)" stroke="#44453f" stroke-width="1.3" stroke-dasharray="4.9 3.2"/><text x="625.4" y="593.9" text-anchor="middle" fill="#595955">VSS</text><circle cx="709.0" cy="587.0" r="34.2" fill="url(#pw)" stroke="#44453f" stroke-width="1.3" stroke-dasharray="4.9 3.2"/><text x="707.9" y="593.9" text-anchor="middle" fill="#595955">VSS</text><circle cx="48.7" cy="669.5" r="34.2" fill="url(#gp)" stroke="#3f4246" stroke-width="1.3" stroke-dasharray="4.9 3.2"/><circle cx="131.2" cy="669.5" r="34.2" fill="url(#gp)" stroke="#3f4246" stroke-width="1.3" stroke-dasharray="4.9 3.2"/><circle cx="213.8" cy="669.5" r="34.2" fill="url(#gp)" stroke="#3f4246" stroke-width="1.3" stroke-dasharray="4.9 3.2"/><circle cx="296.3" cy="669.5" r="34.2" fill="url(#gp)" stroke="#3f4246" stroke-width="1.3" stroke-dasharray="4.9 3.2"/><g transform="translate(139.8,75.6) rotate(31) scale(1.12)"><ellipse cx="7" cy="9" rx="6" ry="2.6" fill="#3f7f5a" opacity="0.55" transform="rotate(-50 7 9)"/><path d="M-0.75 4 L-0.35 13.6 L0.35 13.6 L0.75 4 Z" fill="#98a19d"/><path d="M-4.2 1.5 L-1.1 5.2 L1.1 5.2 L4.2 1.5 Z" fill="#4c5250"/><ellipse cx="0" cy="0.6" rx="8.1" ry="3.1" fill="#555b59"/><path d="M-3.4 -11.5 C-2.6 -7 -3.4 -4 -8 -0.2 C-6 1.6 6 1.6 8 -0.2 C3.4 -4 2.6 -7 3.4 -11.5 Z" fill="#666d6a"/><path d="M-1.6 -10.5 C-1.2 -6.5 -2 -3.6 -4.8 -0.6 L-2.2 0 C-0.8 -3.4 -0.3 -6.5 -0.4 -10.5 Z" fill="#87908c" opacity="0.75"/><ellipse cx="0" cy="-13" rx="6.7" ry="3.9" fill="#5a605e"/><ellipse cx="0.4" cy="-13.8" rx="5.6" ry="2.7" fill="#737a77"/></g><g transform="translate(222.4,158.0) rotate(31) scale(1.12)"><ellipse cx="7" cy="9" rx="6" ry="2.6" fill="#3f7f5a" opacity="0.55" transform="rotate(-50 7 9)"/><path d="M-0.75 4 L-0.35 13.6 L0.35 13.6 L0.75 4 Z" fill="#98a19d"/><path d="M-4.2 1.5 L-1.1 5.2 L1.1 5.2 L4.2 1.5 Z" fill="#4c5250"/><ellipse cx="0" cy="0.6" rx="8.1" ry="3.1" fill="#555b59"/><path d="M-3.4 -11.5 C-2.6 -7 -3.4 -4 -8 -0.2 C-6 1.6 6 1.6 8 -0.2 C3.4 -4 2.6 -7 3.4 -11.5 Z" fill="#666d6a"/><path d="M-1.6 -10.5 C-1.2 -6.5 -2 -3.6 -4.8 -0.6 L-2.2 0 C-0.8 -3.4 -0.3 -6.5 -0.4 -10.5 Z" fill="#87908c" opacity="0.75"/><ellipse cx="0" cy="-13" rx="6.7" ry="3.9" fill="#5a605e"/><ellipse cx="0.4" cy="-13.8" rx="5.6" ry="2.7" fill="#737a77"/></g><g transform="translate(304.9,158.0) rotate(31) scale(1.12)"><ellipse cx="7" cy="9" rx="6" ry="2.6" fill="#3f7f5a" opacity="0.55" transform="rotate(-50 7 9)"/><path d="M-0.75 4 L-0.35 13.6 L0.35 13.6 L0.75 4 Z" fill="#98a19d"/><path d="M-4.2 1.5 L-1.1 5.2 L1.1 5.2 L4.2 1.5 Z" fill="#4c5250"/><ellipse cx="0" cy="0.6" rx="8.1" ry="3.1" fill="#555b59"/><path d="M-3.4 -11.5 C-2.6 -7 -3.4 -4 -8 -0.2 C-6 1.6 6 1.6 8 -0.2 C3.4 -4 2.6 -7 3.4 -11.5 Z" fill="#666d6a"/><path d="M-1.6 -10.5 C-1.2 -6.5 -2 -3.6 -4.8 -0.6 L-2.2 0 C-0.8 -3.4 -0.3 -6.5 -0.4 -10.5 Z" fill="#87908c" opacity="0.75"/><ellipse cx="0" cy="-13" rx="6.7" ry="3.9" fill="#5a605e"/><ellipse cx="0.4" cy="-13.8" rx="5.6" ry="2.7" fill="#737a77"/></g><g transform="translate(304.9,240.5) rotate(31) scale(1.12)"><ellipse cx="7" cy="9" rx="6" ry="2.6" fill="#3f7f5a" opacity="0.55" transform="rotate(-50 7 9)"/><path d="M-0.75 4 L-0.35 13.6 L0.35 13.6 L0.75 4 Z" fill="#98a19d"/><path d="M-4.2 1.5 L-1.1 5.2 L1.1 5.2 L4.2 1.5 Z" fill="#4c5250"/><ellipse cx="0" cy="0.6" rx="8.1" ry="3.1" fill="#555b59"/><path d="M-3.4 -11.5 C-2.6 -7 -3.4 -4 -8 -0.2 C-6 1.6 6 1.6 8 -0.2 C3.4 -4 2.6 -7 3.4 -11.5 Z" fill="#666d6a"/><path d="M-1.6 -10.5 C-1.2 -6.5 -2 -3.6 -4.8 -0.6 L-2.2 0 C-0.8 -3.4 -0.3 -6.5 -0.4 -10.5 Z" fill="#87908c" opacity="0.75"/><ellipse cx="0" cy="-13" rx="6.7" ry="3.9" fill="#5a605e"/><ellipse cx="0.4" cy="-13.8" rx="5.6" ry="2.7" fill="#737a77"/></g></svg>
</div>
<div style="left:1291px;top:215px;width:127.0px;height:242.0px;background:#f3faf5;border:2px solid #3c6c50"></div>
<div style="left:1293px;top:217px;width:123px;height:24px;background:linear-gradient(90deg,#16c350 0%,#12c64c 55%,#2bc45f 68%,#2bc45f 100%);"></div>
<div style="left:1293px;top:454px;width:123px;height:1px;background:#1fb64d;"></div>
<div class="t" style="top:219.00px;font-size:16px;line-height:21px;color:#3e6b52;left:1334.20px;will-change:transform;">PD14</div>
<div class="t" style="top:219.00px;font-size:15px;line-height:21px;color:#4bcf77;left:1375.00px;will-change:transform;">PH9</div>
<div class="t" style="top:219.00px;font-size:15px;line-height:21px;color:#29c95e;left:1296.00px;will-change:transform;">IO_O.</div>
<div class="t" style="top:243.00px;font-size:16px;line-height:21px;color:#5f6461;letter-spacing:-0.240px;left:1317.40px;will-change:transform;">Reset_State</div>
<div class="t" style="top:266.00px;font-size:16px;line-height:21px;color:#5f6461;letter-spacing:0.050px;left:1317.40px;will-change:transform;">FSMC_D0</div>
<div class="t" style="top:290.00px;font-size:16px;line-height:21px;color:#5f6461;letter-spacing:0.014px;left:1317.40px;will-change:transform;">FSMC_DA0</div>
<div class="t" style="top:314.00px;font-size:16px;line-height:21px;color:#5f6461;letter-spacing:-0.514px;left:1317.40px;will-change:transform;">TIM4_CH3</div>
<div class="t" style="top:338.00px;font-size:16px;line-height:21px;color:#5f6461;letter-spacing:-0.644px;left:1317.40px;will-change:transform;">GPIO_Input</div>
<div style="left:1293px;top:359.8px;width:123px;height:23.4px;background:#6cc38c;"></div>
<div class="t" style="top:361.00px;font-size:16px;line-height:21px;color:#5f6461;letter-spacing:-0.530px;left:1317.40px;will-change:transform;">GPIO_Output</div>
<div class="t" style="top:385.00px;font-size:16px;line-height:21px;color:#5f6461;letter-spacing:-0.350px;left:1317.40px;will-change:transform;">GPIO_Analog</div>
<div class="t" style="top:409.00px;font-size:16px;line-height:21px;color:#5f6461;letter-spacing:-0.343px;left:1317.40px;will-change:transform;">EVENTOUT</div>
<div class="t" style="top:433.00px;font-size:16px;line-height:21px;color:#5f6461;letter-spacing:-0.430px;left:1317.40px;will-change:transform;">GPIO_EXTI14</div>
<div style="left:1293px;top:264px;width:123px;height:1px;background:#c6ebd2;"></div>
<svg style="left:1078.9px;top:818.7px" width="27" height="26" viewBox="0 0 27 26"><circle cx="10" cy="10.2" r="9.1" fill="none" stroke="#39a9dc" stroke-width="1.5"/><path d="M16.8 17 L25.5 25" stroke="#39a9dc" stroke-width="1.6"/><path d="M6.4 10.2h7.6M10.2 6.4v7.6" stroke="#39a9dc" stroke-width="2.2"/></svg>
<svg style="left:1165px;top:819px" width="26" height="26" viewBox="0 0 26 26"><path d="M0.9 9.6V0.9H9.6M15.6 0.9H24.3V9.6M24.3 15.6V24.3H15.6M9.6 24.3H0.9V15.6" fill="none" stroke="#39a9dc" stroke-width="1.7"/></svg>
<svg style="left:1250.5px;top:818.5px" width="27" height="26" viewBox="0 0 27 26"><circle cx="10.2" cy="10.2" r="9.2" fill="none" stroke="#39a9dc" stroke-width="1.5"/><path d="M16.8 17 L25.5 25" stroke="#39a9dc" stroke-width="1.6"/><path d="M6.2 10.2h8" stroke="#39a9dc" stroke-width="2.2"/></svg>
<svg style="left:1337px;top:818.5px" width="28" height="26" viewBox="0 0 28 26"><rect x="0.8" y="0.9" width="8.2" height="20.4" fill="#fff" stroke="#39a9dc" stroke-width="1.5"/><rect x="3.6" y="16.3" width="23.3" height="9" fill="#39a9dc"/><path d="M12 1.6 C19 1.6 23.5 6 24 12" fill="none" stroke="#39a9dc" stroke-width="1.5"/><path d="M20 9.2 L27 9.6 L24.4 15.6 Z" fill="#39a9dc"/></svg>
<svg style="left:1423.5px;top:818.5px" width="28" height="26" viewBox="0 0 28 26"><rect x="17.4" y="0.9" width="8.2" height="20.4" fill="#fff" stroke="#39a9dc" stroke-width="1.5"/><rect x="0.5" y="16.3" width="23" height="9" fill="#39a9dc"/><path d="M16 1.6 C9 1.6 4.5 6 4 12" fill="none" stroke="#39a9dc" stroke-width="1.5"/><path d="M8 9.2 L1 9.6 L3.6 15.6 Z" fill="#39a9dc"/></svg>
<svg style="left:1510px;top:819.5px" width="27" height="23" viewBox="0 0 27 23"><rect x="0.8" y="0.8" width="7" height="20.6" fill="#fff" stroke="#39a9dc" stroke-width="1.4"/><path d="M13 0v22" stroke="#39a9dc" stroke-width="2" stroke-dasharray="3 2.2"/><rect x="17.4" y="0.2" width="8.8" height="21.8" fill="#39a9dc"/></svg>
<svg style="left:1597px;top:819px" width="24" height="27" viewBox="0 0 24 27"><rect x="0" y="0" width="23" height="8" fill="#39a9dc"/><path d="M0 12.8h23" stroke="#39a9dc" stroke-width="1.6" stroke-dasharray="3.4 2.4"/><rect x="0.8" y="17.4" width="21.4" height="7.8" fill="#fff" stroke="#39a9dc" stroke-width="1.4"/></svg>
<svg style="left:1659.5px;top:821.5px" width="21.0" height="19.95" viewBox="0 0 20 19"><circle cx="7.9" cy="7.9" r="6.3" fill="none" stroke="#39a9dc" stroke-width="2.2"/><path d="M12.4 12.4 L17.6 16.8" stroke="#39a9dc" stroke-width="2.3" stroke-linecap="round"/></svg>
<div style="left:1685px;top:816px;width:213px;height:30px;border:1px solid #838a92;border-right:none;background:#fff"></div>
<svg style="left:1884px;top:827.5px" width="12" height="8" viewBox="0 0 12 8"><path d="M0.5 1 L6.0 6 L11.5 1" fill="none" stroke="#6a6a6a" stroke-width="1.3"/></svg>
<div style="left:1045px;top:855.2px;width:852px;height:9.4px;background:#dbe9f6;"></div>
<div style="left:1045px;top:855.2px;width:838px;height:9.4px;background:#39a9dc;border-radius:5px;"></div>
<div style="left:1897px;top:117px;width:10px;height:750px;background:#b9c4ca;"></div>
<svg style="left:1898.5px;top:120px" width="8.5" height="15" viewBox="0 0 8.5 15"><path d="M8.5 0 L0 7.5 L8.5 15 Z" fill="#58595b"/></svg>
<svg style="left:1898.5px;top:139.5px" width="8.5" height="16" viewBox="0 0 8.5 16"><path d="M0 0 L8.5 8.0 L0 16 Z" fill="#58595b"/></svg>
</body></html>
